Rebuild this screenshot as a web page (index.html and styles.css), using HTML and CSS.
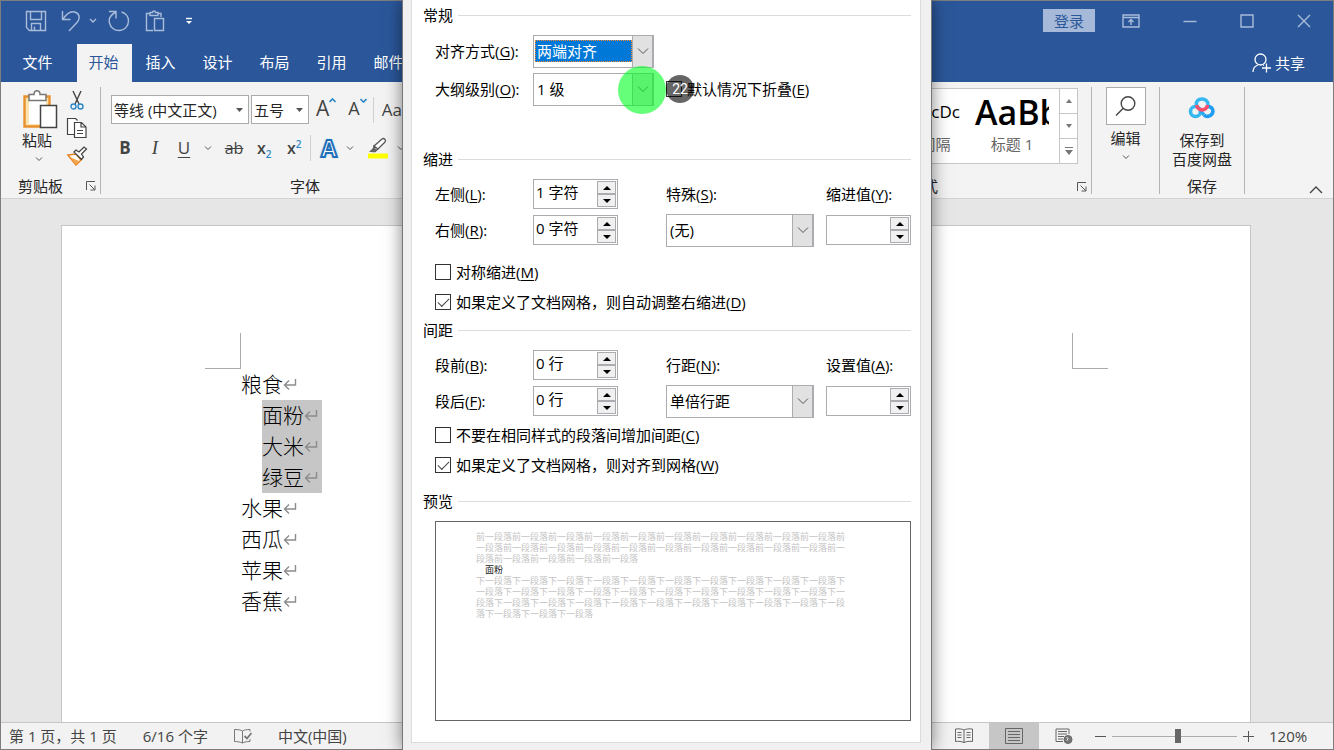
FILE: index.html
```html
<!DOCTYPE html>
<html lang="zh-CN">
<head>
<meta charset="utf-8">
<title>Word - 段落</title>
<link rel="stylesheet" href="styles.css">
</head>
<body>
<div class="app">
  <header class="titlebar">
    <div class="quick">
      <button class="tool" aria-label="保存"><svg width="22" height="22" viewBox="0 0 22 22"><path d="M1.5 1.5h19v19h-16l-3-3zM5.5 1.5v8h11v-8M6.500 20.500v-7h9v7M9.500 20v-3.500"/></svg></button>
      <button class="tool undo" aria-label="撤消"><svg width="20" height="22" viewBox="0 0 20 22"><path d="M1.500 1v8.500h8M2 9C6 3 11 .5 15 2.500c4 2 4 6.500 1 10L8 21"/></svg></button>
      <button class="tool caret" aria-label="撤消选项"><svg width="8" height="6" viewBox="0 0 8 6"><path d="M1 1l3 3 3-3"/></svg></button>
      <button class="tool redo" aria-label="恢复"><svg width="22" height="22" viewBox="0 0 22 22"><path d="M1 1.500h7v7M8 2C2 5 .5 9 1.500 13c1 4.500 5 7.500 9.500 7.500 5.500 0 9.500-4.500 9.500-9.500 0-4.500-3-8-7-9"/></svg></button>
      <button class="tool clip" aria-label="粘贴"><svg width="20" height="22" viewBox="0 0 20 22"><path d="M8 20.500H1.500v-17H5M12.500 3.500H16V7M5 5.500v-3h2.500c0-2 3-2 3 0h2.500v3zM9.500 8.500h9v12h-9z"/></svg></button>
      <button class="tool more" aria-label="自定义"><svg width="8" height="8" viewBox="0 0 8 8"><path d="M1 1.500h6"/><path class="fill" d="M1 4h6L4 7z"/></svg></button>
    </div>
    <div class="winbar">
      <button class="login">登录</button>
      <button class="tool" aria-label="功能区显示选项"><svg width="18" height="14" viewBox="0 0 18 14"><path d="M1 1h16v12H1zM1 3.500h16M9 11V6M6.500 8L9 5.500 11.500 8"/></svg></button>
      <button class="tool" aria-label="最小化"><svg width="14" height="14" viewBox="0 0 14 14"><path d="M.5 7.500h13"/></svg></button>
      <button class="tool" aria-label="最大化"><svg width="14" height="14" viewBox="0 0 14 14"><path d="M1 1h12v12H1z"/></svg></button>
      <button class="tool" aria-label="关闭"><svg width="14" height="14" viewBox="0 0 14 14"><path d="M1 1l12 12M13 1L1 13"/></svg></button>
    </div>
  </header>
  <nav class="tabs">
    <button class="tab file">文件</button>
    <button class="tab active">开始</button>
    <button class="tab">插入</button>
    <button class="tab">设计</button>
    <button class="tab">布局</button>
    <button class="tab">引用</button>
    <button class="tab">邮件</button>
    <button class="share"><svg width="20" height="20" viewBox="0 0 20 20"><circle cx="8.500" cy="6.500" r="5.500"/><path d="M1 19c0-4 2-6 5-7M11 12l1 .5M14.500 10.500v9M10 15h9"/></svg>共享</button>
  </nav>
  <section class="ribbon">
    <div class="group clipboard">
      <div class="group-body">
        <button class="paste">
          <svg width="36" height="40" viewBox="0 0 36 40"><path d="M2.500 6.500h25v30h-25z" fill="#fbe3b0" stroke="#e8912d" stroke-width="2.400"/><path d="M7 10h17v24H7z" fill="#fff"/><path d="M7 10.500v-6h5C12-.5 18-.5 18 4.500h6v6z" fill="#fff" stroke="#777" stroke-width="1.500"/><path d="M18.500 15.500h16v22h-16z" fill="#fff" stroke="#444" stroke-width="1.500"/></svg>
          <span>粘贴</span>
          <svg width="8" height="6" viewBox="0 0 8 6"><path d="M1 1.500l3 3 3-3" fill="none" stroke="#555"/></svg>
        </button>
        <div class="small-tools">
          <button class="ico" aria-label="剪切"><svg width="14" height="20" viewBox="0 0 14 20" fill="none" stroke-width="1.400"><path d="M3 1l6 13M11 1L5 14" stroke="#444"/><circle cx="3.500" cy="16.500" r="2.500" stroke="#2b88c8"/><circle cx="10.500" cy="16.500" r="2.500" stroke="#2b88c8"/></svg></button>
          <button class="ico" aria-label="复制"><svg width="22" height="20" viewBox="0 0 22 20" fill="#fff" stroke="#444" stroke-width="1.200"><path d="M8 16.500H1.500v-16h8l2 2"/><path d="M8.500 4.500h7l4.500 4.500v10.500H8.500zM15 4.500V9h5M11 12.500h6M11 15.500h6"/></svg></button>
          <button class="ico" aria-label="格式刷"><svg width="22" height="20" viewBox="0 0 22 20"><path d="M2 9l8-1 5 6-5 5z" fill="#fff" stroke="#e8801e" stroke-width="1.500"/><path d="M4 11l9 4-3 4z" fill="#f4a64a"/><path d="M8 6l2-2 3 2 5-5 2.500 2-5 5 2 3-2 2.500z" fill="#fff" stroke="#444" stroke-width="1.300"/></svg></button>
        </div>
      </div>
      <div class="group-label"><span>剪贴板</span><button class="launch" aria-label="剪贴板选项"><svg width="10" height="10" viewBox="0 0 10 10"><path d="M.5 9V.5H9M3.500 3.500l5 5M9 4.500V9H4.500"/></svg></button></div>
    </div>
    <div class="group font">
      <div class="font-row">
        <div class="fbox name"><select aria-label="字体"><option>等线 (中文正文)</option></select><svg width="7" height="4" viewBox="0 0 7 4"><path d="M0 0h7L3.500 4z"/></svg></div>
        <div class="fbox size"><select aria-label="字号"><option>五号</option></select><svg width="7" height="4" viewBox="0 0 7 4"><path d="M0 0h7L3.500 4z"/></svg></div>
        <button class="ico grow">A<svg width="7" height="5" viewBox="0 0 7 5"><path d="M.5 4l3-3 3 3"/></svg></button>
        <button class="ico shrink">A<svg width="7" height="5" viewBox="0 0 7 5"><path d="M.5 1l3 3 3-3"/></svg></button>
        <i class="bar"></i>
        <button class="ico case">Aa</button>
      </div>
      <div class="font-row second">
        <button class="ico fmt bold">B</button>
        <button class="ico fmt italic">I</button>
        <button class="ico fmt under">U</button>
        <svg class="chev" width="8" height="6" viewBox="0 0 8 6"><path d="M1 1.500l3 3 3-3"/></svg>
        <button class="ico fmt strike">ab</button>
        <button class="ico fmt script">x<sub>2</sub></button>
        <button class="ico fmt script">x<sup>2</sup></button>
        <i class="bar"></i>
        <button class="ico effect">A</button>
        <svg class="chev" width="8" height="6" viewBox="0 0 8 6"><path d="M1 1.500l3 3 3-3"/></svg>
        <button class="ico mark" aria-label="突出显示"><svg width="22" height="22" viewBox="0 0 22 22"><path d="M7 9L15 2c2-1.500 4.500 1 3 3L11 12zM7 9l4 3-3 2.500H6z" fill="#fff" stroke="#555" stroke-width="1.300"/><path d="M2 15l5-5 3 3-2 2z" fill="#666"/><path d="M1 16.500h20v5H1z" fill="#ff0"/></svg></button>
        <svg class="chev" width="8" height="6" viewBox="0 0 8 6"><path d="M1 1.500l3 3 3-3"/></svg>
      </div>
      <div class="group-label"><span>字体</span></div>
    </div>
    <div class="fill-space"></div>
    <div class="group styles">
      <div class="gallery">
        <button class="style"><span class="sample plain">AaBbCcDc</span><span class="style-name">无间隔</span></button>
        <button class="style"><span class="sample head">AaBb</span><span class="style-name">标题 1</span></button>
        <div class="scroller">
          <button aria-label="上一行"><svg width="6" height="4" viewBox="0 0 6 4"><path d="M0 4h6L3 0z"/></svg></button>
          <button aria-label="下一行"><svg width="6" height="4" viewBox="0 0 6 4"><path d="M0 0h6L3 4z"/></svg></button>
          <button aria-label="其他"><svg width="8" height="8" viewBox="0 0 8 8"><path d="M0 0h8v1H0zM0 3h8L4 8z"/></svg></button>
        </div>
      </div>
      <div class="group-label"><span>样式</span><button class="launch" aria-label="样式选项"><svg width="10" height="10" viewBox="0 0 10 10"><path d="M.5 9V.5H9M3.500 3.500l5 5M9 4.500V9H4.500"/></svg></button></div>
    </div>
    <div class="group edit">
      <button class="edit-btn">
        <span class="lens"><svg width="22" height="22" viewBox="0 0 22 22"><circle cx="13" cy="8.500" r="6.800"/><path d="M8 13.500l-7 7"/></svg></span>
        <span>编辑</span>
        <svg width="8" height="6" viewBox="0 0 8 6"><path d="M1 1.500l3 3 3-3" fill="none" stroke="#555"/></svg>
      </button>
    </div>
    <div class="group cloud">
      <button class="cloud-btn">
        <svg width="28" height="22" viewBox="0 0 28 22" fill="none" stroke-width="3.600"><circle cx="7.500" cy="14.500" r="5" stroke="#35b8f0"/><path d="M16 18c2 2 6 2 8-1s.5-7.500-4-7.500" stroke="#1e9df2"/><path d="M8.500 9C7.500 4 10.500 2 14 2s6.500 2.500 6 6" stroke="#35b8f0"/><path d="M16 18l-4-5" stroke="#2aa9f0"/><path d="M8.800 8c.5 6.500 10 6.500 10.700 0" stroke="#f8506c"/></svg>
        <span>保存到<br>百度网盘</span>
      </button>
      <div class="group-label"><span>保存</span></div>
    </div>
    <button class="collapse" aria-label="折叠功能区"><svg width="14" height="8" viewBox="0 0 14 8"><path d="M1 7l6-6 6 6"/></svg></button>
  </section>
  <main class="workspace">
    <article class="page">
      <div class="corners"><i class="corner left"></i><i class="corner right"></i></div>
      <div class="text">
        <p>粮食<svg class="ret" viewBox="0 0 14 14"><path d="M12.500 2v6H2M6 3.500L1.500 8 6 12.500"/></svg></p>
        <div class="picked">
          <p>面粉<svg class="ret" viewBox="0 0 14 14"><path d="M12.500 2v6H2M6 3.500L1.500 8 6 12.500"/></svg></p>
          <p>大米<svg class="ret" viewBox="0 0 14 14"><path d="M12.500 2v6H2M6 3.500L1.500 8 6 12.500"/></svg></p>
          <p>绿豆<svg class="ret" viewBox="0 0 14 14"><path d="M12.500 2v6H2M6 3.500L1.500 8 6 12.500"/></svg></p>
        </div>
        <p>水果<svg class="ret" viewBox="0 0 14 14"><path d="M12.500 2v6H2M6 3.500L1.500 8 6 12.500"/></svg></p>
        <p>西瓜<svg class="ret" viewBox="0 0 14 14"><path d="M12.500 2v6H2M6 3.500L1.500 8 6 12.500"/></svg></p>
        <p>苹果<svg class="ret" viewBox="0 0 14 14"><path d="M12.500 2v6H2M6 3.500L1.500 8 6 12.500"/></svg></p>
        <p>香蕉<svg class="ret" viewBox="0 0 14 14"><path d="M12.500 2v6H2M6 3.500L1.500 8 6 12.500"/></svg></p>
      </div>
    </article>
  </main>
  <footer class="status">
    <div class="status-left">
      <span>第 1 页，共 1 页</span>
      <span>6/16 个字</span>
      <svg width="18" height="15" viewBox="0 0 18 15" fill="none" stroke="#777"><path d="M8.500 2v12M8.500 2C7 1 4 .5.500 .5v12c3 0 6 .5 8 1.500M8.500 2c1.500-1 4-1.500 7.500-1.500v2M16 10v2.500c-3 0-6 .5-7.500 1.500"/><path d="M10.500 7l2.500 2.500L17.500 4" stroke-width="1.800"/></svg>
      <span>中文(中国)</span>
    </div>
    <div class="status-right">
      <button class="view" aria-label="阅读视图"><svg width="18" height="16" viewBox="0 0 18 16"><path d="M9 2v13M9 2C7 1 4 .5.500 1v12.500c3-.5 6 0 8.500 1C11.500 13.500 14 13 17.500 13.500V1C14 .5 11 1 9 2zM2.500 4.500h4M2.500 7h4M2.500 9.500h4M11.500 4.500h4M11.500 7h4M11.500 9.500h4"/></svg></button>
      <button class="view on" aria-label="页面视图"><svg width="18" height="16" viewBox="0 0 18 16"><path d="M.5 .5h17v15H.5zM3 3.500h12M3 6.500h12M3 9.500h12M3 12.500h12"/></svg></button>
      <button class="view" aria-label="Web 版式视图"><svg width="18" height="16" viewBox="0 0 18 16"><path d="M8 13.500H1V1h13v5M3 3.500h9M3 6h9M3 8.500h6M3 11h5"/><circle cx="13" cy="11.500" r="4" fill="#777"/><path d="M11.500 9l1.500 1.500-1 2" stroke="#f2f2f2"/></svg></button>
      <button class="zoom-step out" aria-label="缩小"><svg width="11" height="11" viewBox="0 0 11 11"><path d="M0 5.500h11"/></svg></button>
      <input class="zoom" type="range" min="0" max="100" value="53" aria-label="缩放">
      <button class="zoom-step" aria-label="放大"><svg width="11" height="11" viewBox="0 0 11 11"><path d="M0 5.500h11M5.500 0v11"/></svg></button>
      <span class="percent">120%</span>
    </div>
  </footer>
</div>

<div class="dialog" role="dialog" aria-label="段落">
  <form class="panel">
    <h2>常规</h2>
    <div class="fields general">
      <label for="align">对齐方式(<u>G</u>):</label>
      <span class="combo"><select id="align" class="focused"><option>两端对齐</option></select><span class="drop"><svg width="12" height="8" viewBox="0 0 12 8"><path d="M1 1.500l5 5 5-5"/></svg></span></span>
      <span></span>
      <label for="level">大纲级别(<u>O</u>):</label>
      <span class="combo"><select id="level"><option>1 级</option></select><span class="drop"><svg width="12" height="8" viewBox="0 0 12 8"><path d="M1 1.500l5 5 5-5"/></svg></span><span class="ring"></span></span>
      <span class="check fold"><input type="checkbox" id="fold"><label for="fold">默认情况下折叠(<u>E</u>)</label><span class="badge">22</span></span>
    </div>
    <h2 class="after-general">缩进</h2>
    <div class="fields">
      <label for="left">左侧(<u>L</u>):</label>
      <span class="spin"><input id="left" type="text" value="1 字符"><span class="steps"><button type="button" aria-label="增加"><svg width="8" height="4" viewBox="0 0 8 4"><path d="M0 4h8L4 0z"/></svg></button><button type="button" aria-label="减少"><svg width="8" height="4" viewBox="0 0 8 4"><path d="M0 0h8L4 4z"/></svg></button></span></span>
      <label for="special">特殊(<u>S</u>):</label>
      <label for="by">缩进值(<u>Y</u>):</label>
      <label for="right">右侧(<u>R</u>):</label>
      <span class="spin"><input id="right" type="text" value="0 字符"><span class="steps"><button type="button" aria-label="增加"><svg width="8" height="4" viewBox="0 0 8 4"><path d="M0 4h8L4 0z"/></svg></button><button type="button" aria-label="减少"><svg width="8" height="4" viewBox="0 0 8 4"><path d="M0 0h8L4 4z"/></svg></button></span></span>
      <span class="combo wide"><select id="special"><option>(无)</option></select><span class="drop"><svg width="12" height="8" viewBox="0 0 12 8"><path d="M1 1.500l5 5 5-5"/></svg></span></span>
      <span class="spin"><input id="by" type="text"><span class="steps"><button type="button" aria-label="增加"><svg width="8" height="4" viewBox="0 0 8 4"><path d="M0 4h8L4 0z"/></svg></button><button type="button" aria-label="减少"><svg width="8" height="4" viewBox="0 0 8 4"><path d="M0 0h8L4 4z"/></svg></button></span></span>
    </div>
    <div class="checks indent-checks">
      <span class="check"><input type="checkbox" id="mirror"><label for="mirror">对称缩进(<u>M</u>)</label></span>
      <span class="check"><input type="checkbox" id="autor" checked><label for="autor">如果定义了文档网格，则自动调整右缩进(<u>D</u>)</label></span>
    </div>
    <h2>间距</h2>
    <div class="fields">
      <label for="before">段前(<u>B</u>):</label>
      <span class="spin"><input id="before" type="text" value="0 行"><span class="steps"><button type="button" aria-label="增加"><svg width="8" height="4" viewBox="0 0 8 4"><path d="M0 4h8L4 0z"/></svg></button><button type="button" aria-label="减少"><svg width="8" height="4" viewBox="0 0 8 4"><path d="M0 0h8L4 4z"/></svg></button></span></span>
      <label for="spacing">行距(<u>N</u>):</label>
      <label for="at">设置值(<u>A</u>):</label>
      <label for="after">段后(<u>F</u>):</label>
      <span class="spin"><input id="after" type="text" value="0 行"><span class="steps"><button type="button" aria-label="增加"><svg width="8" height="4" viewBox="0 0 8 4"><path d="M0 4h8L4 0z"/></svg></button><button type="button" aria-label="减少"><svg width="8" height="4" viewBox="0 0 8 4"><path d="M0 0h8L4 4z"/></svg></button></span></span>
      <span class="combo wide"><select id="spacing"><option>单倍行距</option></select><span class="drop"><svg width="12" height="8" viewBox="0 0 12 8"><path d="M1 1.500l5 5 5-5"/></svg></span></span>
      <span class="spin"><input id="at" type="text"><span class="steps"><button type="button" aria-label="增加"><svg width="8" height="4" viewBox="0 0 8 4"><path d="M0 4h8L4 0z"/></svg></button><button type="button" aria-label="减少"><svg width="8" height="4" viewBox="0 0 8 4"><path d="M0 0h8L4 4z"/></svg></button></span></span>
    </div>
    <div class="checks">
      <span class="check"><input type="checkbox" id="same"><label for="same">不要在相同样式的段落间增加间距(<u>C</u>)</label></span>
      <span class="check"><input type="checkbox" id="grid" checked><label for="grid">如果定义了文档网格，则对齐到网格(<u>W</u>)</label></span>
    </div>
    <h2 class="before-preview">预览</h2>
    <div class="preview">
      <p>前一段落前一段落前一段落前一段落前一段落前一段落前一段落前一段落前一段落前一段落前一段落前一段落前一段落前一段落前一段落前一段落前一段落前一段落前一段落前一段落前一段落前一段落前一段落前一段落前一段落</p>
      <p class="current">面粉</p>
      <p>下一段落下一段落下一段落下一段落下一段落下一段落下一段落下一段落下一段落下一段落下一段落下一段落下一段落下一段落下一段落下一段落下一段落下一段落下一段落下一段落下一段落下一段落下一段落下一段落下一段落下一段落下一段落下一段落下一段落下一段落下一段落下一段落下一段落下一段落</p>
    </div>
  </form>
</div>
</body>
</html>
```
FILE: styles.css
```css
* { box-sizing: border-box; }
html, body { height: 100%; }
body, button, input, select {
  font-family: "Open Sans", "Noto Sans CJK SC", sans-serif;
  font-size: 15px;
  line-height: 20px;
}
body { margin: 0; position: relative; overflow: hidden; color: #262626; }
p, h2 { margin: 0; }
button { margin: 0; padding: 0; border: 0; background: none; color: inherit; }
svg { display: block; flex: none; }

.app { display: flex; flex-direction: column; min-height: 100vh; border: 1px solid #7d7d7d; background: #e6e6e6; }

/* title bar */
.titlebar { display: flex; justify-content: space-between; align-items: center; height: 43px; padding: 0 22px 4px 24px; background: #2b579a; }
.quick, .winbar { display: flex; align-items: center; }
.tool svg { fill: none; stroke: #a9bcda; stroke-width: 1.4; }
.undo { margin-left: 14px; }
.caret { margin-left: 8px; }
.redo { margin-left: 11px; }
.clip { margin-left: 15px; }
.more { margin-left: 20px; }
.more svg { stroke: #fff; }
.more .fill { fill: #fff; stroke: none; }
.winbar { gap: 43px; }
.login { width: 52px; height: 23px; margin-right: -16px; background: #a6b9d8; color: #2b579a; }

/* tabs */
.tabs { display: flex; align-items: stretch; height: 38px; padding-right: 28px; background: #2b579a; color: #fff; }
.tab { width: 57px; padding: 0 2px 2px 0; }
.file { width: 75px; }
.active { width: 55px; margin: 0 1px; background: #f3f3f3; color: #2b579a; }
.share { display: flex; align-items: center; gap: 3px; margin-left: auto; }
.share svg { fill: none; stroke: #fff; stroke-width: 1.3; }

/* ribbon */
.ribbon { display: flex; height: 117px; padding-top: 5px; background: #f3f3f3; border-bottom: 1px solid #d2d2d2; }
.group { display: flex; flex-direction: column; height: 107px; border-right: 1px solid #b4b4b4; }
.group-label { display: flex; justify-content: center; align-items: center; margin-top: auto; height: 16px; }
.launch svg { fill: none; stroke: #555; }
.fill-space { flex: 1; }
.clipboard { width: 100px; }
.group-body { display: flex; justify-content: space-between; padding: 3px 12px 0 21px; }
.paste { display: flex; flex-direction: column; align-items: center; width: 36px; white-space: nowrap; }
.paste span { margin: 0 6px 6px 0; }
.paste > svg:last-child { margin-right: 3px; }
.small-tools { display: flex; flex-direction: column; align-items: center; gap: 8px; width: 22px; }
.clipboard .group-label { justify-content: space-between; padding: 0 4px 0 17px; }
.font { width: 408px; border: 0; padding: 8px 0 0 10px; }
.font-row { display: flex; align-items: center; height: 29px; }
.second { height: 30px; margin-top: 9px; padding-left: 7px; }
.font .group-label { padding-right: 10px; }
.fbox { display: flex; align-items: center; height: 29px; margin-right: 2px; padding-right: 5px; border: 1px solid #ababab; background: #fff; }
.fbox svg { fill: #555; }
.fbox select { flex: 1; min-width: 0; height: 26px; padding: 0 2px; appearance: none; border: 0; background: none; color: #262626; }
.name { width: 138px; }
.size { width: 58px; }
.grow, .shrink { display: flex; align-items: flex-start; padding-bottom: 4px; color: #444; }
.grow { margin-left: 5px; font-size: 21px; }
.shrink { margin-left: 12px; font-size: 18px; }
.grow svg, .shrink svg { fill: none; stroke: #2b88c8; stroke-width: 1.6; }
.bar { width: 1px; height: 26px; background: #d0d0d0; }
.font-row .bar { margin: 0 8px 0 6px; }
.case { font-size: 17px; color: #444; }
.chev { fill: none; stroke: #555; }
.fmt { width: 14px; color: #444; text-align: center; font-size: 17px; }
.bold { font-weight: 700; margin-right: 16px; }
.italic { font-family: "Liberation Serif", serif; font-style: italic; font-size: 19px; margin-right: 15px; }
.under { text-decoration: underline; text-underline-offset: 3px; margin-right: 13px; }
.strike { width: 20px; margin: 0 13px 0 12px; text-decoration: line-through; font-size: 16px; }
.script { width: 17px; margin-right: 13px; font-weight: 600; font-size: 16px; text-align: left; white-space: nowrap; }
.script + .script { margin-right: 0; }
.script sub, .script sup { font-size: 10px; line-height: 0; color: #2b88c8; }
.effect { width: 20px; margin-right: 7px; font-size: 23px; font-weight: 700; color: #fff; -webkit-text-stroke: 2px #1f6fb8; text-shadow: 0 0 3px #6bbcf0; }
.mark { margin: 0 8px 0 13px; }
.styles { width: 337px; padding-top: 1px; }
.gallery { display: flex; justify-content: flex-end; height: 76px; margin-right: 13px; border: 1px solid #c6c6c6; background: #fff; }
.style { display: flex; flex-direction: column; align-items: center; width: 84px; padding-top: 1px; }
.style:nth-child(2) { margin-right: 5px; }
.sample { height: 44px; overflow: hidden; white-space: nowrap; line-height: 44px; color: #000; text-align: left; }
.plain { display: flex; justify-content: flex-end; width: 64px; font-size: 17px; }
.head { width: 74px; font-size: 34px; font-weight: 600; }
.style-name { color: #666; }
.scroller { display: flex; flex-direction: column; width: 18px; border-left: 1px solid #c6c6c6; }
.scroller button { display: flex; flex: 1; align-items: center; justify-content: center; }
.scroller button + button { border-top: 1px solid #c6c6c6; }
.scroller svg { fill: #777; }
.styles .group-label { position: relative; }
.styles .launch { position: absolute; right: 4px; top: 4px; }
.edit { width: 68px; }
.edit-btn, .cloud-btn { display: flex; flex-direction: column; align-items: center; }
.lens { display: flex; align-items: center; justify-content: center; width: 40px; height: 38px; margin-bottom: 3px; border: 1px solid #ababab; background: #fff; }
.lens svg, .collapse svg { fill: none; stroke: #444; stroke-width: 1.4; }
.edit-btn > svg { margin-top: 6px; }
.cloud { width: 85px; }
.cloud-btn { padding-top: 10px; line-height: 19px; }
.cloud-btn svg { margin-bottom: 12px; }
.collapse { align-self: flex-end; width: 14px; margin: 0 10px 4px 64px; }

/* document */
.workspace { display: flex; flex: 1; padding: 26px 82px 0 60px; }
.page { flex: 1; border: 1px solid #c6c6c6; border-bottom: 0; background: #fff; padding: 107px 142px 0 143px; }
.corners { display: flex; justify-content: space-between; }
.corner { width: 36px; height: 36px; border: 0 solid #ababab; border-bottom-width: 1px; }
.corner.left { border-right-width: 1px; }
.corner.right { border-left-width: 1px; }
.text { padding-left: 36px; font-family: "Noto Sans CJK SC", sans-serif; font-size: 21px; font-weight: 300; line-height: 29px; color: #000; }
.text p { display: flex; align-items: center; height: 31px; padding-bottom: 2px; }
.picked { width: 60px; margin-left: 21px; background: #c6c6c6; }
.ret { width: 14px; height: 14px; fill: none; stroke: #8c8c8c; stroke-width: 1.4; }

/* status bar */
.status { display: flex; justify-content: space-between; align-items: stretch; height: 27px; border-top: 1px solid #c6c6c6; background: #f2f2f2; color: #444; }
.status-left, .status-right { display: flex; align-items: center; }
.status-left { gap: 26px; padding-left: 8px; }
.view { display: flex; align-items: center; justify-content: center; align-self: stretch; width: 50px; }
.view svg { fill: none; stroke: #666; }
.on { background: #c6c6c6; }
.zoom-step svg { fill: none; stroke: #555; }
.out { margin-left: 6px; }
.zoom { appearance: none; width: 125px; height: 14px; margin: 0 6px; background: linear-gradient(#ababab, #ababab) center / 100% 1px no-repeat; }
.zoom::-webkit-slider-thumb { appearance: none; width: 6px; height: 14px; background: #666; }
.percent { width: 79px; padding-left: 15px; }

/* paragraph dialog */
.dialog { position: absolute; top: 0; bottom: 0; left: 50%; width: 530px; margin-left: -265px; padding: 0 10px 0 8px; border: 1px solid #777; border-width: 0 1px; background: #f0f0f0; box-shadow: 0 0 16px rgba(0, 0, 0, .5); color: #000; }
.panel { padding: 3px 9px 21px 11px; border: 1px solid #dcdcdc; border-top: 0; background: #fff; }
.panel h2 { display: flex; align-items: center; gap: 5px; height: 24px; font-size: 15px; font-weight: 400; }
.panel h2::after { content: ""; flex: 1; height: 1px; background: #dcdcdc; }
.panel .after-general { margin-top: 39px; }
.panel .before-preview { margin-top: 9px; }
.fields { display: grid; grid-template-columns: 98px 133px 160px 85px; grid-auto-rows: 36px; align-items: center; margin: 5px 0 0 12px; }
.general { grid-template-columns: 98px 133px 1fr; grid-auto-rows: 38px; }
u { text-underline-offset: 2px; }
.combo { position: relative; display: flex; align-items: center; width: 121px; height: 33px; border: 1px solid #ababb0; background: #fff; }
.combo select { flex: 1; min-width: 0; height: 22px; margin-left: 1px; padding: 0 2px; appearance: none; border: 0; outline: 0; background: none; color: #000; }
.combo .focused { padding: 0 1px; background: #0078d7; color: #fff; border: 1px dotted #ff8728; }
.wide { width: 148px; }
.drop { display: flex; align-items: center; justify-content: center; align-self: stretch; width: 21px; border: 1px solid #ababb0; border-width: 0 1px 0 1px; background: #e1e1e1; }
.drop svg { fill: none; stroke: #555; }
.spin { display: flex; width: 85px; height: 30px; padding: 1px; border: 1px solid #ababb0; background: #fff; }
.spin input { flex: 1; min-width: 0; padding: 0 0 4px 1px; border: 0; outline: 0; background: none; color: #000; }
.steps { display: flex; flex-direction: column; width: 19px; }
.steps button { display: flex; flex: 1; align-items: center; justify-content: center; border: 1px solid #ababb0; background: #f0f0f0; }
.check { display: flex; align-items: center; gap: 5px; height: 30px; }
.check input { appearance: none; flex: none; width: 16px; height: 16px; margin: 0; border: 1px solid #333; background: #fff; }
.check input:checked::before { content: ""; display: block; width: 10px; height: 5px; margin: 3px 0 0 2px; border: solid #444; border-width: 0 0 1px 1px; transform: rotate(-45deg); }
.checks { margin: 1px 0 0 12px; }
.indent-checks { margin: 9px 0 1px 12px; }
.fold { position: relative; }
.ring { position: absolute; left: 84px; top: -8px; width: 48px; height: 48px; border-radius: 50%; background: rgba(0, 255, 34, .6); }
.badge { position: absolute; left: 0; top: 1px; width: 28px; height: 28px; border-radius: 50%; background: rgba(0, 0, 0, .6); color: #fff; font: 14px/28px Roboto, sans-serif; text-align: center; }
.preview { min-height: 200px; margin: 8px 0 0 12px; padding: 9px 60px 0 40px; border: 1px solid #646464; font-family: "Noto Sans CJK SC", sans-serif; font-size: 9px; line-height: 11px; color: #c4c4c4; word-break: break-all; }
.preview .current { padding-left: 9px; color: #222; }
```
